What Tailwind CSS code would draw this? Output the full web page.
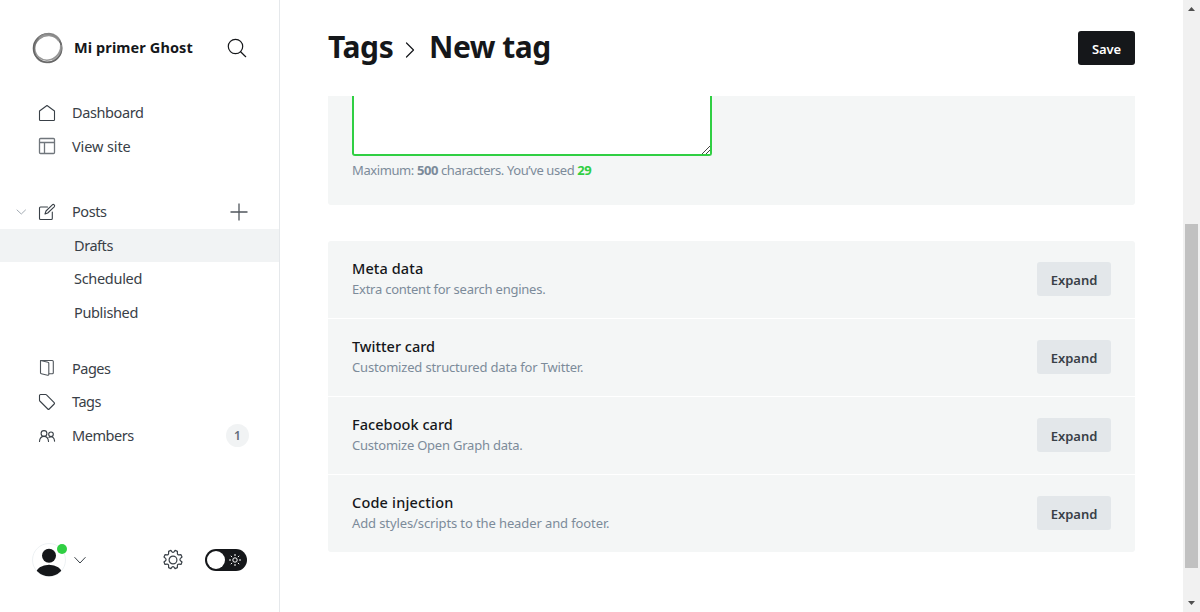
<!DOCTYPE html>
<html lang="es">
<head>
<meta charset="utf-8">
<title>Tags - New tag</title>
<script src="https://cdn.jsdelivr.net/npm/@tailwindcss/browser@4"></script>
</head>
<body class="flex h-[612px] w-[1200px] overflow-hidden bg-white font-['Noto_Sans',sans-serif] text-[#15171a]">

<nav class="flex h-full w-[280px] shrink-0 flex-col border-r border-[#e5e8eb] text-[14.5px] text-[#394047]">
  <div class="flex h-[95px] items-center pl-8 text-[#15171a]">
    <svg class="size-8 shrink-0" viewBox="0 0 32 32" fill="none">
      <circle cx="15.600" cy="16.200" r="14.100" stroke="#666" stroke-width="1.600"/>
      <ellipse cx="16.800" cy="15.200" rx="13.700" ry="12.800" stroke="#777" stroke-width="1.500" stroke-opacity=".75" transform="rotate(-50 16 16)"/>
      <ellipse cx="15.200" cy="16.600" rx="14" ry="13.200" stroke="#666" stroke-width="1.500" stroke-opacity=".7" transform="rotate(-40 16 16)"/>
      <path d="M7 6.500C13 .8 23 1.500 27 9M29 13c.8 6-3 12-9 15" stroke="#999" stroke-width="2.200" stroke-opacity=".7"/>
    </svg>
    <span class="-mt-0.5 ml-2.5 w-[153px] whitespace-nowrap text-[14.5px] font-bold leading-5 tracking-[0.1px]">Mi primer Ghost</span>
    <svg class="size-5 shrink-0" viewBox="0 0 20 20" fill="none" stroke="#15171a" stroke-width="1.200" stroke-linecap="round"><circle cx="8.500" cy="8.500" r="7.200"/><path d="M13.600 13.700 18.700 18.700"/></svg>
  </div>

  <div class="flex flex-col pt-[1px]">
    <a class="flex h-[34px] items-center pl-[38px]">
      <svg class="size-[18px]" viewBox="0 0 18 18" fill="none" stroke="#394047" stroke-width="1.100" stroke-linejoin="round"><path d="M1.500 7 9 1.500 16.500 7V15.700a.8.8 0 0 1-.8.8H2.300a.8.8 0 0 1-.8-.8Z"/></svg>
      <span class="ml-4 tracking-[-0.4px]">Dashboard</span>
    </a>
    <a class="flex h-[33px] items-center pl-[38px]">
      <svg class="-mt-px size-[18px]" viewBox="0 0 18 18" fill="none" stroke="#70767c" stroke-width="1.300"><rect x="1.500" y="1.500" width="15" height="15" rx="1"/><path d="M1.500 5.500h15M6.500 5.500v11"/></svg>
      <span class="ml-4 tracking-[-0.1px]">View site</span>
    </a>
  </div>

  <div class="mt-8 flex flex-col">
    <a class="flex h-[34px] items-center pl-4">
      <svg class="h-[10px] w-[10px]" viewBox="0 0 10 10" fill="none" stroke="#a3abb3" stroke-linecap="round" stroke-linejoin="round"><path d="m1 3 4.300 4L9.500 3"/></svg>
      <svg class="ml-3 size-[18px]" viewBox="0 0 18 18" fill="none" stroke="#394047" stroke-width="1.100" stroke-linejoin="round" stroke-linecap="round"><path d="M9.500 4H2.500a1 1 0 0 0-1 1v10.500a1 1 0 0 0 1 1h10.800a1 1 0 0 0 1-1V9"/><path d="m8 8 6.300-6.100a1.300 1.300 0 0 1 1.900 1.900L9.700 10 7 11Z"/></svg>
      <span class="ml-4 w-[157px] tracking-[-0.45px]">Posts</span>
      <svg class="size-5 shrink-0" viewBox="0 0 20 20" fill="none" stroke="#50565c" stroke-width="1.300"><path d="M10 1.500v17M1.500 10h17"/></svg>
    </a>
    <a class="flex h-[33px] items-center bg-[#f1f3f4] pl-[74px] tracking-[-0.45px]">Drafts</a>
    <a class="flex h-[34px] items-center pl-[74px] tracking-[-0.3px]">Scheduled</a>
    <a class="flex h-[33px] items-center pl-[74px] tracking-[-0.35px]">Published</a>
  </div>

  <div class="mt-[23px] flex flex-col">
    <a class="flex h-[33px] items-center pl-[38px]">
      <svg class="-mt-px size-[18px]" viewBox="0 0 18 18" fill="none" stroke="#50565c" stroke-width="1.100" stroke-linejoin="round"><path d="M2.500 1.500 10 3.300a1 1 0 0 1 .8 1v11a1 1 0 0 1-1.200 1L3.300 14.700a1 1 0 0 1-.8-1Z"/><path d="M2.500 1.500h11.800a1 1 0 0 1 1 1v11.300a1 1 0 0 1-1 1h-3.500"/></svg>
      <span class="ml-4 tracking-[-0.5px]">Pages</span>
    </a>
    <a class="flex h-[34px] items-center pl-[38px]">
      <svg class="size-[18px]" viewBox="0 0 18 18" fill="none" stroke="#394047" stroke-width="1.100" stroke-linejoin="round"><path d="M2.500 1.500h5.300a1 1 0 0 1 .7.300l7.700 7.800a1 1 0 0 1 0 1.400l-5 5a1 1 0 0 1-1.400 0L1.800 8a1 1 0 0 1-.3-.7V2.500a1 1 0 0 1 1-1Z"/></svg>
      <span class="ml-4 tracking-[-0.5px]">Tags</span>
    </a>
    <a class="flex h-[34px] items-center pl-[38px]">
      <svg class="size-[18px]" viewBox="0 0 18 18" fill="none" stroke="#394047" stroke-width="1.100" stroke-linecap="round"><circle cx="6" cy="6.500" r="2.900"/><path d="M1.500 14.500c.2-3.300 2-5.100 4.500-5.100s4.300 1.800 4.500 5.100"/><circle cx="13" cy="7.300" r="2.300"/><path d="M11 10.400c3-1.800 5.300.2 5.600 3.700"/></svg>
      <span class="ml-4 w-[154px] tracking-[-0.45px]">Members</span>
      <span class="-mt-px flex size-[23px] items-center justify-center rounded-full bg-[#f1f3f4] pt-px text-[12px] font-semibold text-[#626d79]">1</span>
    </a>
  </div>

  <div class="mt-auto mb-[35px] flex h-[34px] items-center pl-8">
    <svg class="h-[34px] w-9" viewBox="0 0 36 34"><defs><clipPath id="avatar"><circle cx="17" cy="17" r="16.300"/></clipPath></defs><circle cx="17" cy="17" r="16.500" fill="#fff" stroke="#e9edf0" stroke-width=".8"/><g clip-path="url(#avatar)" fill="#15171a"><circle cx="17" cy="12.800" r="7"/><ellipse cx="17" cy="30.700" rx="13" ry="9"/></g><circle cx="30" cy="6" r="5" fill="#30cf43"/></svg>
    <svg class="ml-[6px] h-3 w-3" viewBox="0 0 12 12" fill="none" stroke="#394047" stroke-linecap="round" stroke-linejoin="round"><path d="m.8 3.500 5.200 5.500 5.200-5.500"/></svg>
    <svg class="ml-[76px] size-[22px]" viewBox="0 0 22 22" fill="none" stroke="#394047" stroke-width="1.200" stroke-linejoin="round"><circle cx="11" cy="11" r="3.900"/><path d="m8.900 1.400 1.100 1.500a1.300 1.300 0 0 0 2 0l1.100-1.500 2.300 1 0 2a1.400 1.400 0 0 0 1.600 1.500l2-.2 1 2.300-1.500 1.400a1.500 1.500 0 0 0 0 2.300l1.500 1.300-1 2.400-2-.3a1.400 1.400 0 0 0-1.600 1.500l0 2-2.300 1-1.100-1.500a1.300 1.300 0 0 0-2 0l-1.100 1.500-2.300-1 0-2A1.400 1.400 0 0 0 5 15.100l-2 .3-1-2.400 1.500-1.300a1.500 1.500 0 0 0 0-2.300L2 8l1-2.300 2 .2a1.400 1.400 0 0 0 1.600-1.500l0-2Z"/></svg>
    <span class="ml-[21px] flex h-[22px] w-[42px] items-center rounded-full bg-[#15171a] pl-0.5">
      <span class="size-[18px] rounded-full bg-white"></span>
      <svg class="ml-1 size-3" viewBox="0 0 12 12" fill="none" stroke="#fff"><circle cx="6" cy="6" r="2.200"/><path d="M6 0v2M6 10v2M0 6h2M10 6h2M1.800 1.800l1.300 1.300M8.900 8.900l1.300 1.300M1.800 10.200l1.300-1.300M8.900 3.100l1.300-1.300"/></svg>
    </span>
  </div>
</nav>

<main class="flex h-full w-[903px] shrink-0 flex-col pl-12 pr-12">
  <header class="flex h-24 shrink-0 items-center">
    <h1 class="-mt-0.5 flex items-center text-[30px] font-bold leading-9">
      <span class="w-[77px] tracking-[-0.4px]">Tags</span>
      <svg class="mt-[5px] h-4 w-2.5" viewBox="0 0 10 16" fill="none" stroke="#15171a" stroke-width="1.200" stroke-linecap="round" stroke-linejoin="round"><path d="M1.500 1 8.500 8l-7 7"/></svg>
      <span class="ml-[14px] whitespace-nowrap tracking-[-0.5px]">New tag</span>
    </h1>
    <button class="ml-auto flex h-[34px] w-[57px] items-center justify-center rounded-[3px] bg-[#15171a] pt-[3px] text-[13px] font-semibold tracking-[-0.1px] text-white">Save</button>
  </header>

  <section class="h-[109px] w-[807px] shrink-0 rounded-b-[3px] bg-[#f4f6f6] px-6">
    <div class="flex h-[60px] w-[360px] items-end justify-end rounded-b-[3px] border-2 border-t-0 border-[#30cf43] bg-white">
      <svg class="size-2.5" viewBox="0 0 10 10" stroke="#444" stroke-width="1"><path d="M2 10 10 2M6 10 10 6"/></svg>
    </div>
    <p class="mt-1 text-[13px] leading-5 tracking-[-0.4px] text-[#7c8b9a]">Maximum: <b class="font-bold">500</b> characters. You’ve used <b class="font-bold text-[#30cf43]">29</b></p>
  </section>

  <section class="mt-9 flex w-[807px] flex-col gap-px overflow-hidden rounded-[3px]">
    <div class="flex h-[77px] items-center justify-between bg-[#f4f6f6] px-6">
      <div><h4 class="-mt-px mb-px text-[14.500px] font-medium leading-5 tracking-[0.1px]">Meta data</h4><p class="text-[13px] leading-[21px] tracking-[-0.240px] text-[#7c8b9a]">Extra content for search engines.</p></div>
      <button class="-mt-px flex h-[34px] w-[74px] items-center justify-center rounded-[3px] bg-[#e3e7ea] pt-[3px] text-[13px] font-semibold text-[#394047]">Expand</button>
    </div>
    <div class="flex h-[77px] items-center justify-between bg-[#f4f6f6] px-6">
      <div><h4 class="-mt-px mb-px text-[14.500px] font-medium leading-5">Twitter card</h4><p class="text-[13px] leading-[21px] tracking-[-0.180px] text-[#7c8b9a]">Customized structured data for Twitter.</p></div>
      <button class="-mt-px flex h-[34px] w-[74px] items-center justify-center rounded-[3px] bg-[#e3e7ea] pt-[3px] text-[13px] font-semibold text-[#394047]">Expand</button>
    </div>
    <div class="flex h-[77px] items-center justify-between bg-[#f4f6f6] px-6">
      <div><h4 class="-mt-px mb-px text-[14.500px] font-medium leading-5 tracking-[0.050px]">Facebook card</h4><p class="text-[13px] leading-[21px] tracking-[-0.220px] text-[#7c8b9a]">Customize Open Graph data.</p></div>
      <button class="-mt-px flex h-[34px] w-[74px] items-center justify-center rounded-[3px] bg-[#e3e7ea] pt-[3px] text-[13px] font-semibold text-[#394047]">Expand</button>
    </div>
    <div class="flex h-[77px] items-center justify-between bg-[#f4f6f6] px-6">
      <div><h4 class="-mt-px mb-px text-[14.500px] font-medium leading-5 tracking-[0.180px]">Code injection</h4><p class="text-[13px] leading-[21px] tracking-[-0.110px] text-[#7c8b9a]">Add styles/scripts to the header and footer.</p></div>
      <button class="-mt-px flex h-[34px] w-[74px] items-center justify-center rounded-[3px] bg-[#e3e7ea] pt-[3px] text-[13px] font-semibold text-[#394047]">Expand</button>
    </div>
  </section>
</main>

<aside class="flex h-full w-[17px] shrink-0 flex-col items-center bg-[#f1f1f1]">
  <svg class="mt-[7px] h-1 w-[7px]" viewBox="0 0 7 4" fill="#505050"><path d="M0 4 3.500 0 7 4Z"/></svg>
  <div class="mt-[213px] h-[344px] w-[13px] bg-[#c1c1c1]"></div>
  <svg class="mt-[33px] h-1 w-[7px]" viewBox="0 0 7 4" fill="#505050"><path d="M0 0h7L3.500 4Z"/></svg>
</aside>
</body>
</html>
